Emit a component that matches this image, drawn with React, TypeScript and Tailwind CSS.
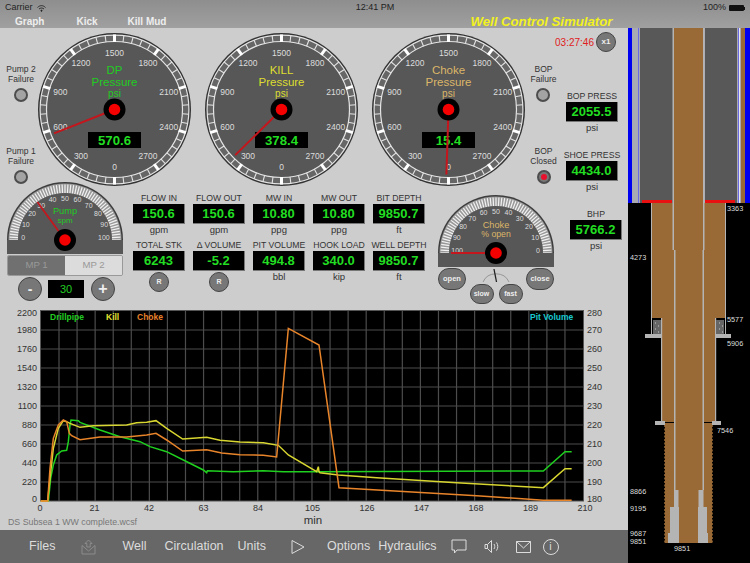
const polar = (cx: number, cy: number, r: number, deg: number) => {
  const a = (deg * Math.PI) / 180
  return [cx + r * Math.sin(a), cy - r * Math.cos(a)]
}

function Dial({ title, color, value, reading }: { title: string; color: string; value: string; reading: number }) {
  const c = 76.5
  const needle = polar(c, c, 65, 180 + (reading / 300) * 36)
  const majors = [0, 300, 600, 900, 1200, 1500, 1800, 2100, 2400, 2700]
  return (
    <svg width="153" height="153" viewBox="0 0 153 153" className="shrink-0 block">
      <circle cx={c} cy={c} r="76.5" fill="#333" />
      <circle cx={c} cy={c} r="74.4" fill="#666" stroke="#e4e4e4" strokeWidth="1.2" />
      <circle cx={c} cy={c} r="68" fill="#575757" stroke="#e4e4e4" strokeWidth="1.2" />
      {Array.from({ length: 50 }).map((_, i) => {
        const [x1, y1] = polar(c, c, 68, i * 7.2)
        const [x2, y2] = polar(c, c, 74.5, i * 7.2)
        return <line key={i} x1={x1} y1={y1} x2={x2} y2={y2} stroke="#e4e4e4" strokeWidth="1.1" />
      })}
      {majors.map((m, i) => {
        const [x1, y1] = polar(c, c, 67.5, 180 + i * 36)
        const [x2, y2] = polar(c, c, 75, 180 + i * 36)
        const [tx, ty] = polar(c, c, 57, 180 + i * 36)
        return (
          <g key={m}>
            <line x1={x1} y1={y1} x2={x2} y2={y2} stroke="#fff" strokeWidth="3" />
            <text x={tx} y={ty + 3} textAnchor="middle" fontSize="8.5" fill="#ddd">{m}</text>
          </g>
        )
      })}
      <text x={c} y="41" textAnchor="middle" fontSize="11.5" fill={color}>{title}</text>
      <text x={c} y="52.5" textAnchor="middle" fontSize="11.5" fill={color}>Pressure</text>
      <text x={c} y="64" textAnchor="middle" fontSize="10" fill={color}>psi</text>
      <rect x="50" y="99" width="53" height="16" fill="#000" />
      <text x={c} y="112" textAnchor="middle" fontSize="13.2" fontWeight="bold" fill="#22dd22">{value}</text>
      <line x1={c} y1={c} x2={needle[0]} y2={needle[1]} stroke="#c4161c" strokeWidth="2" />
      <circle cx={c} cy={c} r="11" fill="#000" />
      <circle cx={c} cy={c} r="5.8" fill="#f40000" />
    </svg>
  )
}

function HalfDial({ labels, needleDeg, needleLen, children }: { labels: string[]; needleDeg: number; needleLen: number; children: React.ReactNode }) {
  const cx = 58
  const cy = 58
  const tip = polar(cx, cy, needleLen, needleDeg)
  return (
    <svg width="116" height="72" viewBox="0 0 116 72" className="block">
      <path d="M0 58 A58 58 0 0 1 116 58 Z" fill="#3c3c3c" />
      <path d="M1.5 58 A56.5 56.5 0 0 1 114.5 58 Z" fill="#999" />
      {Array.from({ length: 61 }).map((_, i) => {
        const deg = -90 + i * 3
        const [x1, y1] = polar(cx, cy, i % 6 === 0 ? 45 : 47, deg)
        const [x2, y2] = polar(cx, cy, 55.5, deg)
        return <line key={i} x1={x1} y1={y1} x2={x2} y2={y2} stroke="#f2f2f2" strokeWidth="1.2" />
      })}
      <path d="M11 58 A47 47 0 0 1 105 58 Z" fill="#575757" />
      <rect x="0" y="58" width="116" height="14" fill="#575757" />
      {labels.map((l, i) => {
        const [tx, ty] = polar(cx, cy, l === '100' ? 39 : 42, -86 + i * 17.2)
        return <text key={l} x={tx} y={ty + 2.5} textAnchor="middle" fontSize="7" fill="#ddd">{l}</text>
      })}
      {children}
      <line x1={cx} y1={cy} x2={tip[0]} y2={tip[1]} stroke="#c4161c" strokeWidth="1.8" />
      <circle cx={cx} cy={cy} r="11" fill="#000" />
      <circle cx={cx} cy={cy} r="5.8" fill="#f40000" />
    </svg>
  )
}

function RoundButton({ label, className }: { label: string; className: string }) {
  return (
    <div className={`rounded-full bg-[#777] border-[1.5px] border-[#444] text-[#eee] font-bold flex items-center justify-center shrink-0 ${className}`}>
      {label}
    </div>
  )
}

function Readout({ label, value, unit, reset }: { label: string; value: string; unit?: string; reset?: boolean }) {
  return (
    <div className="w-[52px] flex flex-col items-center">
      <div className="h-2.5 leading-[10px] text-[8.7px] text-[#333] whitespace-nowrap">{label}</div>
      <div className="mt-px w-[52px] h-5 bg-black border-b border-r border-[#777] flex items-center justify-center text-[13px] font-bold text-[#22dd22]">
        {value}
      </div>
      {unit && <div className="h-2.5 leading-[12px] text-[9.5px] text-[#333]">{unit}</div>}
      {reset && <RoundButton label="R" className="mt-px w-5 h-5 text-[7px]" />}
    </div>
  )
}

function Lamp({ on }: { on?: boolean }) {
  return (
    <div className={`w-3.5 h-3.5 rounded-full border-2 border-[#4d4d4d] flex items-center justify-center ${on ? 'bg-[#777]' : 'bg-[#a3a3a3]'}`}>
      {on && <div className="w-1.5 h-1.5 rounded-full bg-[#e8112d]" />}
    </div>
  )
}

function LampBlock({ top, bottom, on }: { top: string; bottom: string; on?: boolean }) {
  return (
    <div className="flex flex-col items-center text-[8.5px] leading-[10px] text-[#333]">
      <div>{top}</div>
      <div>{bottom}</div>
      <div className="mt-1">
        <Lamp on={on} />
      </div>
    </div>
  )
}

const drillpipe: number[][] = [[145,590],[152,520],[160,480],[170,450],[185,438],[200,436],[205,410],[210,360],[213,345],[235,347],[240,352],[300,375],[360,395],[420,410],[450,425],[500,440],[550,465],[610,495],[620,503],[622,497],[700,500],[790,497],[850,500],[955,500],[1630,498],[1695,440],[1715,440]]
const kill: number[][] = [[122,588],[143,588],[150,520],[160,430],[175,370],[190,347],[200,350],[210,355],[240,367],[280,362],[380,360],[410,353],[440,352],[468,347],[500,370],[548,402],[620,397],[660,406],[720,411],[790,413],[835,421],[865,450],[950,500],[955,485],[957,500],[960,503],[1015,510],[1130,518],[1370,533],[1630,548],[1695,491],[1715,491]]
const choke: number[][] = [[122,588],[143,588],[150,490],[160,400],[175,360],[190,345],[200,350],[208,385],[215,392],[240,404],[300,396],[380,396],[440,390],[468,385],[500,405],[548,438],[620,434],[665,444],[720,449],[790,451],[830,456],[865,70],[957,120],[1017,548],[1430,572],[1630,586],[1715,586]]

const toPts = (a: number[][]) => a.map(([x, y]) => `${x / 3},${305 + y / 3}`).join(' ')

function Chart() {
  const left = [2200, 1980, 1760, 1540, 1320, 1100, 880, 660, 440, 220, 0]
  const right = [280, 270, 260, 250, 240, 230, 220, 210, 200, 190, 180]
  const bottom = [0, 21, 42, 63, 84, 105, 126, 147, 168, 189, 210]
  const labelY = (i: number) => (i === 0 ? 316 : i === 10 ? 502 : 333 + (i - 1) * 19)
  return (
    <svg width="628" height="225" viewBox="0 305 628 225" className="block">
      <rect x="40.5" y="310.5" width="543" height="190.5" fill="#000" stroke="#555" />
      {Array.from({ length: 9 }).map((_, i) => (
        <line key={i} x1="41" x2="583" y1={330 + i * 19} y2={330 + i * 19} stroke="#4c4c4c" strokeWidth="1.2" />
      ))}
      {Array.from({ length: 29 }).map((_, i) => (
        <line key={i} x1={59 + i * 18.07} x2={59 + i * 18.07} y1="311" y2="501" stroke="#4c4c4c" strokeWidth="1.2" />
      ))}
      {left.map((v, i) => (
        <text key={v} x="37" y={labelY(i)} textAnchor="end" fontSize="9" fill="#333">{v}</text>
      ))}
      {right.map((v, i) => (
        <text key={v} x="587" y={labelY(i)} fontSize="9" fill="#333">{v}</text>
      ))}
      {bottom.map((v, i) => (
        <text key={v} x={40 + i * 54.5} y="511" textAnchor="middle" fontSize="9" fill="#333">{v}</text>
      ))}
      <text x="313" y="523.5" textAnchor="middle" fontSize="11.5" fill="#333">min</text>
      <text x="8" y="525" fontSize="8.8" fill="#777">DS Subsea 1 WW complete.wcsf</text>
      <text x="50" y="320" fontSize="8.5" fontWeight="bold" fill="#22cc22">Drillpipe</text>
      <text x="106" y="320" fontSize="8.5" fontWeight="bold" fill="#e0e030">Kill</text>
      <text x="137" y="320" fontSize="8.5" fontWeight="bold" fill="#e8802a">Choke</text>
      <text x="530" y="320" fontSize="8.5" fontWeight="bold" fill="#18c8d0">Pit Volume</text>
      <polyline points={toPts(drillpipe)} fill="none" stroke="#1fd01f" strokeWidth="1.5" />
      <polyline points={toPts(kill)} fill="none" stroke="#d8d630" strokeWidth="1.5" />
      <polyline points={toPts(choke)} fill="none" stroke="#e8842a" strokeWidth="1.5" />
    </svg>
  )
}

function Wellbore() {
  const brown = '#9a6a36'
  const steel = '#b4b4b4'
  const depth = [
    { t: '3363', x: 727, y: 211 },
    { t: '4273', x: 630, y: 260 },
    { t: '5577', x: 727, y: 322 },
    { t: '5906', x: 727, y: 346 },
    { t: '7546', x: 717, y: 433 },
    { t: '8866', x: 630, y: 494 },
    { t: '9195', x: 630, y: 511 },
    { t: '9687', x: 630, y: 536 },
    { t: '9851', x: 630, y: 544 },
    { t: '9851', x: 674, y: 551 },
  ]
  return (
    <svg width="122" height="535" viewBox="628 28 122 535" className="block shrink-0">
      <rect x="628" y="28" width="122" height="535" fill="#000" />
      {/* riser section */}
      <rect x="628" y="28" width="122" height="175" fill="#a9a9b4" />
      <rect x="628" y="28" width="4" height="175" fill="#0000f0" />
      <rect x="745" y="28" width="5" height="175" fill="#0000f0" />
      <rect x="741" y="28" width="4" height="175" fill={brown} />
      <rect x="638" y="28" width="1" height="175" fill="#6a6ae0" />
      <rect x="640" y="28" width="33" height="175" fill="#585858" />
      <rect x="705" y="28" width="32" height="175" fill="#585858" />
      <rect x="738" y="28" width="1" height="175" fill="#6a6ae0" />
      <rect x="739" y="28" width="1" height="175" fill="#e8e8f0" />
      <rect x="642" y="200" width="30" height="3" fill="#e81010" />
      <rect x="705" y="200" width="30" height="3" fill="#e81010" />
      {/* casing */}
      <rect x="652" y="203" width="73" height="115" fill={brown} />
      <rect x="651" y="203" width="1" height="132" fill={steel} />
      <rect x="725" y="203" width="1" height="132" fill={steel} />
      <rect x="662" y="318" width="53" height="104" fill={brown} />
      <rect x="661" y="318" width="1.2" height="105" fill={steel} />
      <rect x="715" y="318" width="1.2" height="105" fill={steel} />
      <rect x="653" y="320" width="8" height="16" fill="#666" />
      <rect x="716" y="320" width="8" height="16" fill="#666" />
      <path d="M655 323h1M658 326h1M655 329h1M658 332h1M719 323h1M722 326h1M719 329h1M722 332h1" stroke="#ccc" strokeWidth="1" />
      <rect x="645" y="334" width="17" height="4" fill={steel} />
      <rect x="715" y="334" width="16" height="4" fill={steel} />
      <rect x="655" y="421" width="10" height="4" fill={steel} />
      <rect x="712" y="421" width="9" height="4" fill={steel} />
      {/* open hole */}
      <rect x="665" y="423" width="47" height="120" fill={brown} />
      <line x1="665" y1="425" x2="665" y2="543" stroke={brown} strokeWidth="1.6" strokeDasharray="2 1.5" />
      <line x1="712" y1="425" x2="712" y2="543" stroke={brown} strokeWidth="1.6" strokeDasharray="2 1.5" />
      {/* drill string */}
      <rect x="672.5" y="28" width="1.5" height="222" fill={steel} />
      <rect x="703" y="28" width="1.5" height="222" fill={steel} />
      <rect x="674" y="28" width="29" height="515" fill={brown} />
      <rect x="674" y="250" width="1.5" height="240" fill={steel} />
      <rect x="702.5" y="250" width="1.5" height="240" fill={steel} />
      <rect x="674" y="490" width="4.5" height="17" fill={steel} />
      <rect x="698.5" y="490" width="5" height="17" fill={steel} />
      <rect x="670" y="507" width="9" height="26" fill={steel} />
      <rect x="698" y="507" width="9" height="26" fill={steel} />
      <rect x="668" y="533" width="11" height="10" fill={steel} />
      <rect x="698" y="533" width="10" height="10" fill={steel} />
      {depth.map((d, i) => (
        <text key={i} x={d.x} y={d.y} fontSize="7.3" fill="#ddd">{d.t}</text>
      ))}
    </svg>
  )
}

function Toolbar() {
  return (
    <div className="h-[33px] bg-[#676767] flex items-center text-[12.5px] text-[#dcdcdc]">
      <span className="ml-[29px]">Files</span>
      <svg width="15" height="16" viewBox="0 0 15 16" fill="none" stroke="#8c8c8c" strokeWidth="1" className="ml-[26px]">
        <path d="M1 6.5V15H14V6.5M1 6.5L7.5 12L14 6.5" />
        <path d="M7.5 1L11 4.5H9.2V8H5.8V4.5H4Z" />
      </svg>
      <span className="ml-[26px]">Well</span>
      <span className="ml-[18px]">Circulation</span>
      <span className="ml-[14px]">Units</span>
      <svg width="14" height="16" viewBox="0 0 14 16" fill="none" stroke="#dcdcdc" strokeWidth="1" className="ml-[25px]">
        <path d="M1 1.5V14.5L13 8Z" />
      </svg>
      <span className="ml-[22px]">Options</span>
      <span className="ml-[8px]">Hydraulics</span>
      <svg width="16" height="15" viewBox="0 0 16 15" fill="none" stroke="#dcdcdc" strokeWidth="1" className="ml-[14px]">
        <path d="M1 1H15V11H6L3.5 14V11H1Z" />
      </svg>
      <svg width="16" height="15" viewBox="0 0 16 15" fill="none" stroke="#dcdcdc" strokeWidth="1" className="ml-[17px]">
        <path d="M1 5.5V9.5H3.5V5.5ZM3.5 5.5L7.5 1.5V13.5L3.5 9.5M10 5C11 6.5 11 8.5 10 10M12.5 3.5C14.2 6 14.2 9 12.5 11.5" />
      </svg>
      <svg width="15" height="12" viewBox="0 0 15 12" fill="none" stroke="#dcdcdc" strokeWidth="1" className="ml-[16px]">
        <path d="M0.5 0.5H14.5V11.5H0.5ZM0.5 0.5L7.5 7L14.5 0.5" />
      </svg>
      <div className="ml-[12px] w-4 h-4 rounded-full border border-[#dcdcdc] flex items-center justify-center text-[11px] leading-none">i</div>
    </div>
  )
}

export default function App() {
  const pumpLabels = ['0', '10', '20', '30', '40', '50', '60', '70', '80', '90', '100']
  const chokeLabels = ['100', '90', '80', '70', '60', '50', '40', '30', '20', '10', '0']

  return (
    <div className="w-[750px] h-[563px] overflow-hidden flex flex-col font-['Liberation_Sans',Arial,sans-serif]">
      {/* Status bar + menu */}
      <div className="h-7 shrink-0 bg-linear-to-b from-[#8e8e8e] to-[#a0a0a0]">
        <div className="h-4 px-[5px] flex items-center text-[9px] text-[#222]">
          <div className="flex-1 flex items-center gap-1">
            Carrier
            <svg width="9" height="7" viewBox="0 0 9 7" fill="none" stroke="#222" strokeWidth="0.9">
              <path d="M0.5 2.5C3 0 6 0 8.5 2.5M2 4C3.5 2.7 5.5 2.7 7 4" />
              <circle cx="4.5" cy="5.7" r="0.6" fill="#222" />
            </svg>
          </div>
          <div className="text-center">12:41 PM</div>
          <div className="flex-1 flex items-center justify-end gap-[3px]">
            100%
            <div className="flex items-center">
              <div className="w-[15px] h-[6px] bg-[#111] rounded-[1px]" />
              <div className="w-px h-[3px] bg-[#111]" />
            </div>
          </div>
        </div>
        <div className="h-3 flex items-center text-[10px] font-bold text-[#eee] leading-none">
          <span className="ml-[15px]">Graph</span>
          <span className="ml-[32px]">Kick</span>
          <span className="ml-[30px]">Kill Mud</span>
          <span className="ml-[304px] text-[13.2px] italic text-[#f2f220]">Well Control Simulator</span>
        </div>
      </div>

      <div className="flex-1 flex min-h-0">
        <div className="w-[628px] flex flex-col bg-[#cdcdcd]">
          {/* Pressure gauges */}
          <div className="h-[164px] flex items-start">
            <div className="w-[38px] pl-1 pt-9 flex flex-col items-center">
              <LampBlock top="Pump 2" bottom="Failure" />
              <div className="mt-[44px]">
                <LampBlock top="Pump 1" bottom="Failure" />
              </div>
            </div>
            <div className="mt-[5px] flex gap-[14px]">
              <Dial title="DP" color="#22cc22" value="570.6" reading={570.6} />
              <Dial title="KILL" color="#dede30" value="378.4" reading={378.4} />
              <Dial title="Choke" color="#dcb668" value="15.4" reading={15.4} />
            </div>
            <div className="flex-1 flex flex-col">
              <div className="mt-1 h-5 pr-3 flex items-center justify-end gap-0.5 text-[10px] text-[#e02020]">
                03:27:46
                <RoundButton label="x1" className="w-5 h-5 text-[8px]" />
              </div>
              <div className="flex">
                <div className="w-[37px] pt-3 flex flex-col items-center">
                  <LampBlock top="BOP" bottom="Failure" />
                  <div className="mt-[44px]">
                    <LampBlock top="BOP" bottom="Closed" on />
                  </div>
                </div>
                <div className="w-[60px] pt-[39px] flex flex-col items-center gap-[18px]">
                  <Readout label="BOP PRESS" value="2055.5" unit="psi" />
                  <Readout label="SHOE PRESS" value="4434.0" unit="psi" />
                </div>
              </div>
            </div>
          </div>

          {/* Pump, readouts, choke */}
          <div className="h-[123px] -mt-2.5 flex items-start">
            <div className="ml-[7px] w-[116px]">
              <HalfDial labels={pumpLabels} needleDeg={-36} needleLen={47}>
                <text x="58" y="32" textAnchor="middle" fontSize="9.2" fill="#22cc22">Pump</text>
                <text x="58" y="41" textAnchor="middle" fontSize="8" fill="#22cc22">spm</text>
              </HalfDial>
              <div className="mt-px h-[21px] flex text-[9.6px] text-[#999] rounded-[2px] overflow-hidden border border-[#999]">
                <div className="flex-1 bg-[#707070] flex items-center justify-center">MP 1</div>
                <div className="flex-1 bg-[#dcdcdc] flex items-center justify-center">MP 2</div>
              </div>
              <div className="ml-[11px] mt-px flex items-center gap-[6px]">
                <RoundButton label="-" className="w-6 h-6 text-[14px]" />
                <div className="w-9 h-[18px] bg-black flex items-center justify-center text-[11px] text-[#22cc22]">30</div>
                <RoundButton label="+" className="w-6 h-6 ml-px text-[16px]" />
              </div>
            </div>

            <div className="ml-2.5 pt-[11px] grid grid-cols-[repeat(5,52px)] gap-x-2 gap-y-1.5">
              <Readout label="FLOW IN" value="150.6" unit="gpm" />
              <Readout label="FLOW OUT" value="150.6" unit="gpm" />
              <Readout label="MW IN" value="10.80" unit="ppg" />
              <Readout label="MW OUT" value="10.80" unit="ppg" />
              <Readout label="BIT DEPTH" value="9850.7" unit="ft" />
              <Readout label="TOTAL STK" value="6243" reset />
              <Readout label="Δ VOLUME" value="-5.2" reset />
              <Readout label="PIT VOLUME" value="494.8" unit="bbl" />
              <Readout label="HOOK LOAD" value="340.0" unit="kip" />
              <Readout label="WELL DEPTH" value="9850.7" unit="ft" />
            </div>

            <div className="ml-[13px] mt-[13px] w-[116px]">
              <HalfDial labels={chokeLabels} needleDeg={-90} needleLen={45}>
                <text x="58" y="33" textAnchor="middle" fontSize="9.2" fill="#dcb668">Choke</text>
                <text x="58" y="42" textAnchor="middle" fontSize="8.7" fill="#dcb668">% open</text>
              </HalfDial>
              <div className="mt-px flex items-start">
                <RoundButton label="open" className="w-7 h-[22px] text-[7.5px]" />
                <div className="w-[60px] flex flex-col items-center">
                  <svg width="30" height="16" viewBox="0 0 30 16" fill="none" className="block">
                    <path d="M2 14A14 13 0 0 1 28 14" stroke="#888" strokeWidth="0.8" />
                    <path d="M13 1L15.5 14" stroke="#222" strokeWidth="1.3" />
                  </svg>
                  <div className="flex gap-[5px]">
                    <RoundButton label="slow" className="w-6 h-5 text-[7px]" />
                    <RoundButton label="fast" className="w-6 h-5 text-[7px]" />
                  </div>
                </div>
                <RoundButton label="close" className="w-7 h-[22px] text-[7.5px]" />
              </div>
            </div>

            <div className="ml-3 mt-[27px] w-[60px] flex justify-center">
              <Readout label="BHP" value="5766.2" unit="psi" />
            </div>
          </div>

          <Chart />
          <Toolbar />
        </div>

        <Wellbore />
      </div>
    </div>
  )
}
